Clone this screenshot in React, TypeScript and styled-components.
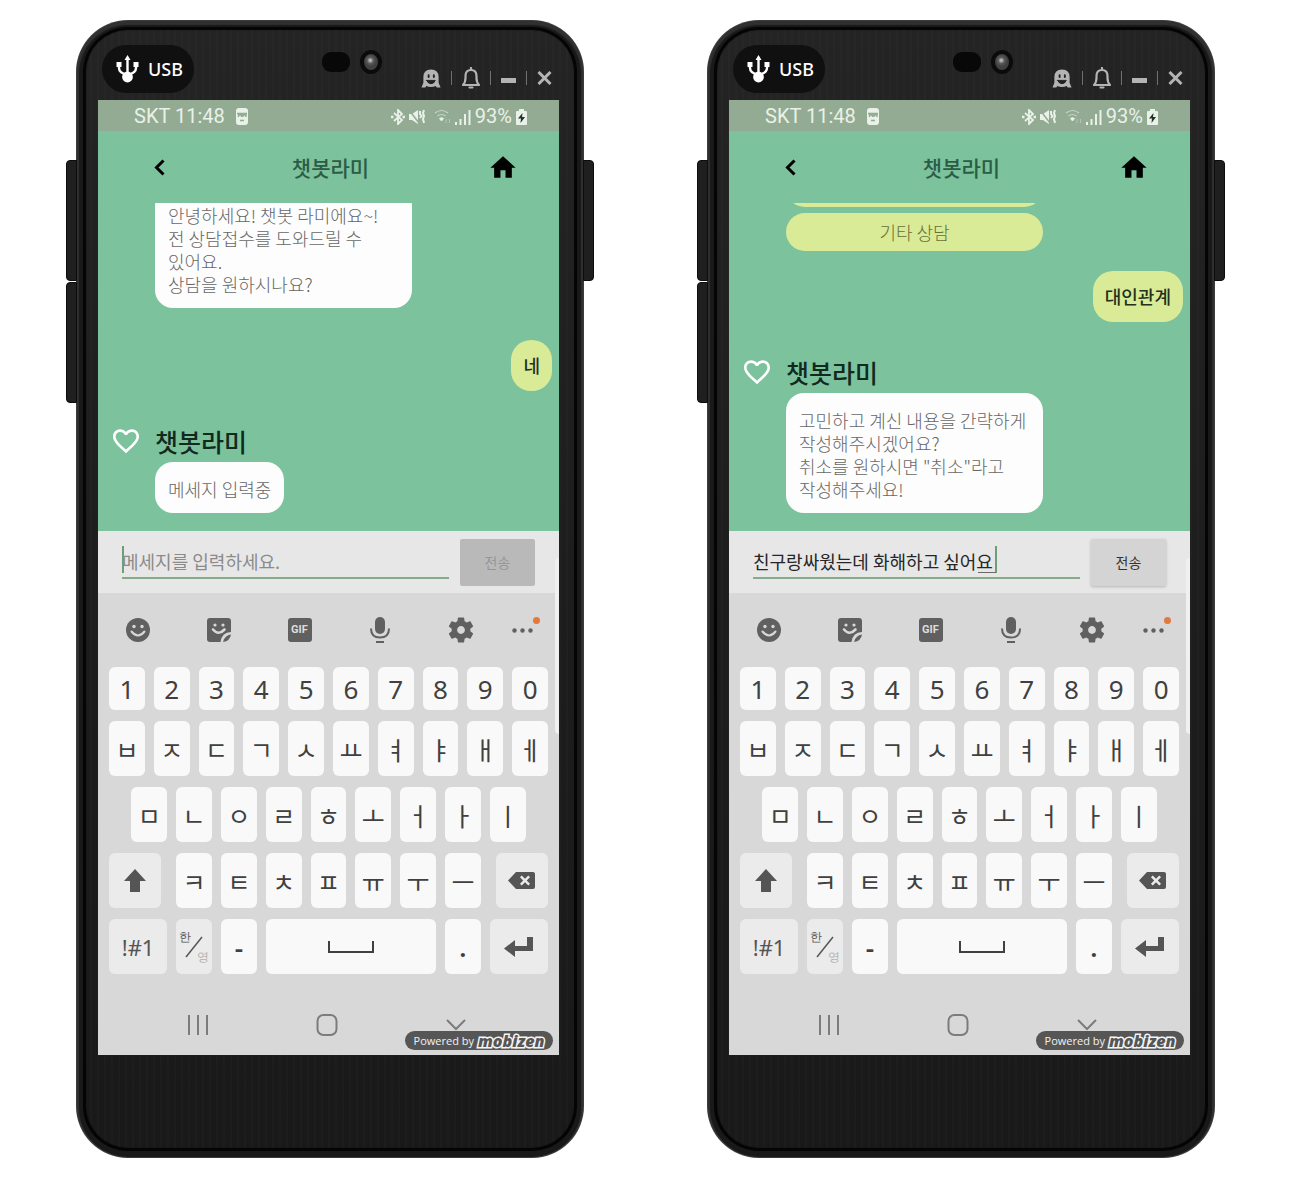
import React from "react";
import styled, { createGlobalStyle, css } from "styled-components";

const GlobalStyle = createGlobalStyle`
  *, *::before, *::after { box-sizing: border-box; }
  body {
    margin: 0;
    background: #ffffff;
    font-family: "Noto Sans CJK KR", "Noto Sans", sans-serif;
  }
  button, input { font: inherit; color: inherit; }
  button { border: 0; padding: 0; background: none; cursor: pointer; }
  svg { display: block; }
`;

const Page = styled.main`
  display: flex;
  align-items: flex-start;
  gap: 123px;
  padding: 20px 75px 20px 76px;
`;

/* ---------- device ---------- */

const Device = styled.section`
  position: relative;
  flex: 1 1 0;
  min-width: 440px;
  padding: 0 25px 103px 22px;
  border-radius: 52px;
  background:
    repeating-linear-gradient(90deg, rgba(255, 255, 255, 0.015) 0 2px, transparent 2px 7px),
    linear-gradient(#242424, #1d1d1d 50%, #191919);
  box-shadow:
    inset 0 0 0 1px #3c3c3c,
    inset 0 2px 1px 3px #303030,
    inset 0 0 0 7px #191919,
    inset 0 0 1px 10px #040404;
`;

const SideKey = styled.span<{ $side: "left" | "right"; $top: number }>`
  position: absolute;
  top: ${(p) => p.$top}px;
  ${(p) => p.$side}: -10px;
  width: 11px;
  height: 121px;
  background: #1f1f1f;
  border: 1px solid #0c0c0c;
  border-radius: ${(p) => (p.$side === "left" ? "4px 0 0 4px" : "0 4px 4px 0")};
`;

const TopBezel = styled.div`
  display: flex;
  align-items: flex-start;
  height: 80px;
  padding: 25px 7px 0 4px;
`;

const UsbBadge = styled.div`
  display: flex;
  align-items: center;
  gap: 9px;
  height: 48px;
  padding: 0 11px 0 14px;
  border-radius: 24px;
  background: #101010;
  color: #ffffff;
  font: 500 18px/24px "Noto Sans", sans-serif;
`;

const Sensors = styled.div`
  display: flex;
  align-items: center;
  gap: 10px;
  margin: 5px 39px 0 auto;
`;

const Speaker = styled.span`
  width: 28px;
  height: 20px;
  border-radius: 9px;
  background: #080808;
`;

const Lens = styled.span`
  width: 22px;
  height: 24px;
  border: 4px solid #0b0b0b;
  border-radius: 50%;
  background: radial-gradient(circle at 45% 40%, #b5b5b5 0 1px, #5c5c5c 3px, #404040 6px);
`;

const WindowBar = styled.div`
  display: flex;
  align-items: center;
  gap: 10px;
  height: 24px;
  margin-top: 21px;
  color: #b4b4b4;
`;

const WindowButton = styled.button`
  display: grid;
  place-items: center;
  height: 24px;
`;

const Divider = styled.span`
  width: 1px;
  height: 14px;
  background: #707070;
`;

const Screen = styled.div`
  position: relative;
  overflow: hidden;
  background: #7bc29d;
`;

/* ---------- app bars ---------- */

const StatusBar = styled.div`
  display: flex;
  align-items: center;
  justify-content: space-between;
  height: 31px;
  padding: 2px 32px 0 36px;
  background: #93ab92;
  color: #e9f1e9;
  font: 400 20px/29px Roboto, sans-serif;
`;

const StatusGroup = styled.div<{ $gap: number }>`
  display: flex;
  align-items: center;
  gap: ${(p) => p.$gap}px;
`;

const AppBar = styled.header`
  display: flex;
  align-items: center;
  justify-content: space-between;
  height: 72px;
  padding: 0 43px 0 49px;
  color: #000000;
`;

const AppTitle = styled.h1`
  margin: 0;
  font-size: 21px;
  font-weight: 500;
  line-height: 32px;
  color: #2b5c45;
`;

/* ---------- conversation ---------- */

const Chat = styled.div`
  display: flex;
  flex-direction: column;
  justify-content: flex-end;
  height: 328px;
  padding: 0 7px 18px 15px;
  overflow: hidden;
`;

const Indent = styled.div`
  display: flex;
  flex-direction: column;
  align-items: flex-start;
  flex-shrink: 0;
  gap: 6px;
  padding-left: 42px;
`;

const BotBubble = styled.p<{ $wide?: boolean }>`
  margin: 0;
  ${(p) => p.$wide && css`width: 257px;`}
  padding: 16px 13px 12px;
  border-radius: 18px;
  background: #fdfdfd;
  color: #676767;
  font-size: 18px;
  font-weight: 300;
  line-height: 23px;
  white-space: pre-line;
`;

const UserBubble = styled.p<{ $space: number }>`
  flex-shrink: 0;
  align-self: flex-end;
  margin: ${(p) => p.$space}px 0 29px;
  padding: 14px 12px;
  border-radius: 20px;
  background: #daeb98;
  color: #22301c;
  font-size: 18px;
  font-weight: 500;
  line-height: 23px;
`;

const Sender = styled.div`
  display: flex;
  flex-shrink: 0;
  align-items: center;
  gap: 16px;
  height: 42px;
  color: #ffffff;
`;

const SenderName = styled.h2`
  margin: 0;
  color: #12291d;
  font-size: 25px;
  font-weight: 500;
  line-height: 42px;
`;

const Choice = styled.button`
  width: 257px;
  height: 38px;
  border-radius: 19px;
  background: #daeb98;
  color: #666f36;
  font-size: 18px;
  font-weight: 300;
  line-height: 38px;
`;

/* ---------- composer ---------- */

const Composer = styled.form`
  display: flex;
  align-items: center;
  gap: 11px;
  height: 62px;
  padding: 0 24px;
  background: #e7e7e7;
`;

const Field = styled.div`
  position: relative;
  flex: 1;
  min-width: 0;
`;

const MessageInput = styled.input`
  display: block;
  width: 100%;
  height: 34px;
  padding: 0;
  border: 0;
  border-bottom: 2px solid #83ab8c;
  border-radius: 0;
  outline: 0;
  background: transparent;
  color: #262626;
  font-size: 18px;
  line-height: 28px;
  &::placeholder { color: #8b8b8b; opacity: 1; }
`;

const Caret = styled.span`
  position: absolute;
  top: 1px;
  left: 0;
  width: 2px;
  height: 27px;
  background: #6f9c7b;
`;

const Composing = styled.span`
  position: absolute;
  top: 1px;
  left: 225px;
  width: 19px;
  height: 27px;
  border-right: 2px solid #6f9c7b;
  border-bottom: 1px solid #6a6a6a;
`;

const SendButton = styled.button`
  width: 75px;
  height: 47px;
  border-radius: 2px;
  background: #d4d4d4;
  box-shadow: 0 1px 3px rgba(0, 0, 0, 0.22);
  color: #333333;
  font-size: 14px;
  line-height: 20px;
  &:disabled {
    background: #b9b9b9;
    box-shadow: none;
    color: #969696;
  }
`;

const EdgeHandle = styled.span`
  position: absolute;
  top: 458px;
  right: 0;
  width: 4px;
  height: 176px;
  border-radius: 4px 0 0 4px;
  background: #f0f0f0;
`;

/* ---------- keyboard ---------- */

const Keyboard = styled.div`
  background: #d8d8d8;
  color: #404040;
`;

const Tools = styled.div`
  display: grid;
  grid-template-columns: repeat(5, 15fr) 8fr;
  align-items: center;
  height: 74px;
  padding-right: 15px;
  color: #606060;
`;

const ToolButton = styled.button`
  position: relative;
  justify-self: center;
  display: grid;
  place-items: center;
  width: 26px;
  height: 26px;
`;

const NewDot = styled.span`
  position: absolute;
  top: 0;
  right: -4px;
  width: 7px;
  height: 7px;
  border-radius: 50%;
  background: #e2793f;
`;

const Keys = styled.div`
  display: grid;
  grid-template-columns: repeat(20, 1fr);
  grid-template-rows: 43px repeat(4, 55px);
  gap: 11px 9px;
  padding: 0 11px;
`;

type KeyKind = "digit" | "jamo" | "action";

const Key = styled.button<{ $kind: KeyKind; $span: number; $start?: number; $trim?: "left" | "right" }>`
  display: grid;
  place-items: center;
  grid-column: ${(p) => p.$start ?? "auto"} / span ${(p) => p.$span};
  ${(p) => p.$trim && `margin-${p.$trim}: 6px;`}
  border-radius: 6px;
  background: ${(p) => (p.$kind === "action" ? "#ebebeb" : "#f9f9f9")};
  ${(p) => p.$kind === "action" && css`color: #555555;`}
  font-size: ${(p) => (p.$kind === "jamo" ? 25 : p.$kind === "digit" ? 26 : 22)}px;
  line-height: 32px;
  ${(p) => p.$kind !== "jamo" && css`font-family: "Noto Sans", sans-serif;`}
`;

const Punctuation = styled(Key)`
  font-weight: 600;
`;

const Language = styled.span`
  display: grid;
  grid-template-columns: 12px 6px 12px;
  grid-template-rows: 16px 18px;
  justify-content: center;
  font-size: 12px;
  line-height: 14px;
`;

const Alternate = styled.span`
  grid-area: 2 / 3;
  align-self: end;
  color: #b2b2b2;
`;

const Slash = styled.svg`
  grid-area: 1 / 1 / 3 / 4;
  place-self: center;
`;

const Primary = styled.span`
  grid-area: 1 / 1;
`;

const NavBar = styled.nav`
  display: grid;
  grid-template-columns: repeat(3, 1fr);
  place-items: center;
  height: 81px;
  padding: 20px 39px 0 35px;
  color: #7c7c7c;
`;

const NavButton = styled.button`
  display: grid;
  place-items: center;
`;

const Powered = styled.div`
  position: absolute;
  right: 6px;
  bottom: 5px;
  display: flex;
  align-items: center;
  justify-content: center;
  gap: 4px;
  width: 148px;
  height: 19px;
  border-radius: 10px;
  background: #565656;
  color: #f2f2f2;
  font: 400 11px/19px "Open Sans", sans-serif;
`;

const Brand = styled.span`
  color: #565656;
  font: italic 800 16px/16px "Open Sans", sans-serif;
  -webkit-text-stroke: 3px #f4f4f4;
  paint-order: stroke fill;
`;

/* ---------- drawings ---------- */

const Glyph = ({ d, size = 24, box = "0 0 24 24", width }: { d: string; size?: number; box?: string; width?: number }) => (
  <svg width={width ?? size} height={size} viewBox={box} fill="currentColor" fillRule="evenodd" aria-hidden="true">
    <path d={d} />
  </svg>
);

const UsbIcon = () => (
  <svg width="23" height="28" viewBox="0 0 23 28" fill="none" stroke="#fff" strokeWidth="2.4" aria-hidden="true">
    <path d="M11.500 4v18M3 10v3q0 5 8.500 7Q20 18 20 13v-3" />
    <circle cx="11.500" cy="22" r="5.400" fill="#fff" stroke="none" />
    <path d="M11.500 0l3 5h-6zM.5 7h5v5h-5zM17.500 7h5v5h-5z" fill="#fff" stroke="none" />
  </svg>
);

const GhostIcon = () => (
  <svg width="20" height="19" viewBox="0 0 21 19" aria-hidden="true">
    <path fill="currentColor" d="M10.500 0q8 0 8 8v6l2 5h-4l-1-1.500q-5 2-10 0L4.500 19h-4l2-5V8q0-8 8-8z" />
    <g fill="none" stroke="#222" strokeWidth="2" strokeLinecap="round">
      <path d="M8 6v2M13.500 6v2" />
      <path d="M6 11.500h9q-1.500 3.500-4.500 3.500T6 11.500z" fill="#222" strokeWidth="1" />
    </g>
  </svg>
);

const BellIcon = () => (
  <svg width="18" height="22" viewBox="1 0 18 22" fill="none" stroke="currentColor" strokeWidth="2.2" aria-hidden="true">
    <path d="M10 1v2M2 18q2.500-2.500 2.500-7V9q0-6 5.500-6t5.500 6v2q0 4.500 2.500 7zM8.500 20.500h3" strokeLinejoin="round" strokeLinecap="round" />
  </svg>
);

const SamsungMark = () => (
  <svg width="12" height="17" viewBox="0 0 12 17" aria-hidden="true">
    <rect width="12" height="17" rx="3" fill="currentColor" />
    <path d="M1 5.500h10M2.500 9V7h3v2M7 9V7h3v2M4 12.500h4" stroke="#93ab92" strokeWidth="1.400" fill="none" />
  </svg>
);

const BluetoothIcon = () => (
  <svg width="14" height="16" viewBox="0 0 14 16" fill="none" stroke="currentColor" strokeWidth="1.800" aria-hidden="true">
    <path d="M3 4l8 7-4 4V1l4 4-8 7" />
    <path d="M0 8h2.500M11.500 8H14" strokeWidth="2.400" />
  </svg>
);

const MuteIcon = () => (
  <svg width="17" height="16" viewBox="0 0 17 16" aria-hidden="true">
    <path d="M0 5h3l6-4v14l-6-4H0z" fill="currentColor" />
    <path d="M0 1l10 13" stroke="#93ab92" strokeWidth="1.500" />
    <path d="M11 2v3l1.500 2-1.500 2M15 1l-1 3 1 3-1 3 1 4" fill="none" stroke="currentColor" strokeWidth="2" />
  </svg>
);

const WifiIcon = () => (
  <svg width="17" height="15" viewBox="0 0 17 15" fill="none" stroke="currentColor" aria-hidden="true">
    <path d="M1 4q6.500-5 13 0M3.500 7q4-3 8 0" strokeWidth="1.200" opacity=".6" />
    <path d="M5.500 9.500q2-1.500 4 0l-2 2.500z" fill="currentColor" />
    <path d="M12 10v4M15.500 10v4" strokeWidth="1" opacity=".4" />
  </svg>
);

const SignalIcon = () => (
  <svg width="16" height="16" viewBox="0 0 16 16" stroke="currentColor" strokeWidth="2" aria-hidden="true">
    <path d="M1 16v-3M5.500 16v-6M10 16V5M14.500 16V1" />
  </svg>
);

const BatteryIcon = () => (
  <svg width="11" height="16" viewBox="0 0 11 16" aria-hidden="true">
    <path fill="currentColor" d="M3 0h5v2h2q1 0 1 1v12q0 1-1 1H1q-1 0-1-1V3q0-1 1-1h2z" />
    <path fill="#1f3327" d="M6.500 4L2 9.500h3L4.500 14 9 8H6z" />
  </svg>
);

const HOME = "M10 20v-6h4v6h5v-8h3L12 3 2 12h3v8z";
const HEART = "M16.500 3c-1.740 0-3.410.81-4.500 2.090C10.910 3.810 9.240 3 7.500 3 4.420 3 2 5.420 2 8.500c0 3.780 3.400 6.860 8.550 11.540L12 21.350l1.450-1.320C18.600 15.360 22 12.280 22 8.500 22 5.420 19.580 3 16.500 3zm-4.400 15.550l-.1.1-.1-.1C7.140 14.240 4 11.390 4 8.500 4 6.500 5.500 5 7.500 5c1.540 0 3.040.99 3.570 2.360h1.870C13.460 5.990 14.960 5 16.500 5c2 0 3.500 1.500 3.500 3.500 0 2.890-3.140 5.740-7.900 10.050z";
const GEAR = "M19.140 12.940c.04-.3.060-.61.060-.94 0-.32-.02-.64-.07-.94l2.030-1.580c.18-.14.230-.41.120-.61l-1.920-3.320c-.12-.22-.37-.29-.59-.22l-2.390.96c-.5-.38-1.030-.7-1.620-.94l-.36-2.540c-.04-.24-.24-.41-.48-.41h-3.840c-.24 0-.43.17-.47.41l-.36 2.540c-.59.24-1.130.57-1.620.94l-2.390-.96c-.22-.08-.47 0-.59.22L2.740 8.870c-.12.21-.08.47.12.61l2.030 1.580c-.05.3-.09.63-.09.94s.02.64.07.94l-2.030 1.580c-.18.14-.23.41-.12.61l1.920 3.320c.12.22.37.29.59.22l2.390-.96c.5.38 1.030.7 1.620.94l.36 2.540c.05.24.24.41.48.41h3.840c.24 0 .44-.17.470-.41l.36-2.540c.59-.24 1.130-.56 1.620-.94l2.390.96c.22.08.47 0 .59-.22l1.920-3.320c.12-.22.070-.47-.12-.61l-2.010-1.580zM12 15c-1.660 0-3-1.340-3-3s1.340-3 3-3 3 1.340 3 3-1.340 3-3 3z";

const SmileIcon = () => (
  <svg width="24" height="24" viewBox="0 0 24 24" aria-hidden="true">
    <circle cx="12" cy="12" r="12" fill="currentColor" />
    <g fill="#d8d8d8">
      <circle cx="8" cy="8.500" r="1.700" />
      <circle cx="16" cy="8.500" r="1.700" />
    </g>
    <path d="M5.500 13.500q6.500 8 13 0" fill="none" stroke="#d8d8d8" strokeWidth="2" strokeLinecap="round" />
  </svg>
);

const StickerIcon = () => (
  <svg width="24" height="24" viewBox="0 0 24 24" aria-hidden="true">
    <path fill="currentColor" d="M3 0h18q3 0 3 3v11q-9 0-10.500 10H3q-3 0-3-3V3q0-3 3-3z" />
    <path fill="currentColor" d="M24 16.500q-1 6.500-8 7.500 1.500-6.500 8-7.500z" />
    <g fill="#d8d8d8">
      <circle cx="8" cy="7" r="1.600" />
      <circle cx="16" cy="7" r="1.600" />
    </g>
    <path d="M6 11.500q5.500 6.500 11.500 0" fill="none" stroke="#d8d8d8" strokeWidth="2.600" strokeLinecap="round" />
  </svg>
);

const GifIcon = styled.span`
  display: grid;
  place-items: center;
  width: 24px;
  height: 24px;
  border-radius: 3px;
  background: #606060;
  color: #dedede;
  font: 700 11px/24px Roboto, sans-serif;
`;

const MicIcon = () => (
  <svg width="22" height="26" viewBox="0 0 22 26" aria-hidden="true">
    <rect x="6" width="10" height="17" rx="5" fill="currentColor" />
    <path d="M2 11.500q0 9 9 9t9-9M7 25h8" fill="none" stroke="currentColor" strokeWidth="2" />
  </svg>
);

const MoreIcon = () => (
  <svg width="21" height="5" viewBox="0 0 21 5" fill="currentColor" aria-hidden="true">
    <circle cx="2.500" cy="2.500" r="2.200" />
    <circle cx="10.500" cy="2.500" r="2.200" />
    <circle cx="18.500" cy="2.500" r="2.200" />
  </svg>
);

/* ---------- composition ---------- */

const digits = "1234567890".split("");
const rowOne = "ㅂㅈㄷㄱㅅㅛㅕㅑㅐㅔ".split("");
const rowTwo = "ㅁㄴㅇㄹㅎㅗㅓㅏㅣ".split("");
const rowThree = "ㅋㅌㅊㅍㅠㅜㅡ".split("");

function SoftKeyboard() {
  return (
    <Keyboard>
      <Tools>
        <ToolButton type="button" aria-label="이모티콘"><SmileIcon /></ToolButton>
        <ToolButton type="button" aria-label="스티커"><StickerIcon /></ToolButton>
        <ToolButton type="button"><GifIcon>GIF</GifIcon></ToolButton>
        <ToolButton type="button" aria-label="음성 입력"><MicIcon /></ToolButton>
        <ToolButton type="button" aria-label="설정"><Glyph d={GEAR} size={26} box="2 2 20 20" /></ToolButton>
        <ToolButton type="button" aria-label="더보기"><MoreIcon /><NewDot /></ToolButton>
      </Tools>
      <Keys>
        {digits.map((k) => <Key key={k} type="button" $kind="digit" $span={2}>{k}</Key>)}
        {rowOne.map((k) => <Key key={k} type="button" $kind="jamo" $span={2}>{k}</Key>)}
        {rowTwo.map((k, i) => (
          <Key key={k} type="button" $kind="jamo" $span={2} $start={i === 0 ? 2 : undefined}>{k}</Key>
        ))}
        <Key type="button" aria-label="Shift" $kind="action" $span={3} $start={1} $trim="right">
          <Glyph d="M11 0l11 12h-6v11H6V12H0z" box="0 0 22 23" width={22} size={23} />
        </Key>
        {rowThree.map((k) => <Key key={k} type="button" $kind="jamo" $span={2}>{k}</Key>)}
        <Key type="button" aria-label="지우기" $kind="action" $span={3} $trim="left">
          <Glyph d="M8 0h17q2 0 2 2v13q0 2-2 2H8L0 8.500zM12 5.200L15.200 8.500 12 11.800 13.700 13.500 17 10.200 20.300 13.500 22 11.800 18.700 8.500 22 5.200 20.300 3.500 17 6.800 13.700 3.500z" box="0 0 27 17" width={27} size={17} />
        </Key>
        <Key type="button" $kind="action" $span={3}>!#1</Key>
        <Key type="button" $kind="action" $span={2}>
          <Language>
            <Primary>한</Primary>
            <Slash width="20" height="22" viewBox="0 0 20 22" stroke="currentColor" strokeWidth="1.5" aria-hidden="true">
              <path d="M18 1L2 21" />
            </Slash>
            <Alternate>영</Alternate>
          </Language>
        </Key>
        <Punctuation type="button" $kind="digit" $span={2}>-</Punctuation>
        <Key type="button" aria-label="스페이스" $kind="digit" $span={8}>
          <svg width="46" height="12" viewBox="0 0 46 12" fill="none" stroke="currentColor" strokeWidth="2" aria-hidden="true">
            <path d="M1 0v11h44V0" />
          </svg>
        </Key>
        <Punctuation type="button" $kind="digit" $span={2}>.</Punctuation>
        <Key type="button" aria-label="Enter" $kind="action" $span={3}>
          <Glyph d="M23 0h6v14H11v6L0 11.500 11 3v6h12z" box="0 0 29 20" width={29} size={20} />
        </Key>
      </Keys>
      <NavBar>
        <NavButton type="button" aria-label="최근 앱">
          <svg width="20" height="20" viewBox="0 0 20 20" stroke="currentColor" strokeWidth="2" aria-hidden="true">
            <path d="M1 0v20M10 0v20M19 0v20" />
          </svg>
        </NavButton>
        <NavButton type="button" aria-label="홈">
          <svg width="22" height="22" viewBox="0 0 22 22" fill="none" stroke="currentColor" strokeWidth="2" aria-hidden="true">
            <rect x="1.500" y="1" width="19" height="20" rx="6" />
          </svg>
        </NavButton>
        <NavButton type="button" aria-label="닫기">
          <svg width="20" height="12" viewBox="0 0 20 12" fill="none" stroke="currentColor" strokeWidth="2" aria-hidden="true">
            <path d="M1 1l9 9 9-9" />
          </svg>
        </NavButton>
      </NavBar>
    </Keyboard>
  );
}

function Phone({ draft, children }: { draft?: string; children: React.ReactNode }) {
  return (
    <Device>
      <SideKey $side="left" $top={140} />
      <SideKey $side="left" $top={262} />
      <SideKey $side="right" $top={140} />
      <TopBezel>
        <UsbBadge><UsbIcon />USB</UsbBadge>
        <Sensors><Speaker /><Lens /></Sensors>
        <WindowBar>
          <WindowButton type="button" aria-label="프로필"><GhostIcon /></WindowButton>
          <Divider />
          <WindowButton type="button" aria-label="알림"><BellIcon /></WindowButton>
          <Divider />
          <WindowButton type="button" aria-label="최소화">
            <Glyph d="M0 8h15v5H0z" box="0 0 15 17" width={15} size={17} />
          </WindowButton>
          <Divider />
          <WindowButton type="button" aria-label="창 닫기">
            <svg width="15" height="14" viewBox="0 0 15 14" stroke="currentColor" strokeWidth="3" aria-hidden="true">
              <path d="M1.500 1l12 12M13.500 1l-12 12" />
            </svg>
          </WindowButton>
        </WindowBar>
      </TopBezel>
      <Screen>
        <StatusBar>
          <StatusGroup $gap={11}><span>SKT 11:48</span><SamsungMark /></StatusGroup>
          <StatusGroup $gap={4}>
            <BluetoothIcon />
            <MuteIcon />
            <span />
            <WifiIcon />
            <SignalIcon />
            <span>93%</span>
            <BatteryIcon />
          </StatusGroup>
        </StatusBar>
        <AppBar>
          <WindowButton type="button" aria-label="뒤로">
            <svg width="24" height="24" viewBox="0 0 24 24" fill="none" stroke="currentColor" strokeWidth="3" aria-hidden="true">
              <path d="M16.500 5.500l-7 7 7 7" />
            </svg>
          </WindowButton>
          <AppTitle>챗봇라미</AppTitle>
          <WindowButton type="button" aria-label="홈으로">
            <Glyph d={HOME} box="2 2 20 19" width={26} size={24} />
          </WindowButton>
        </AppBar>
        <Chat>{children}</Chat>
        <Composer onSubmit={(e) => e.preventDefault()}>
          <Field>
            <MessageInput aria-label="메세지" placeholder="메세지를 입력하세요." defaultValue={draft} />
            {draft ? <Composing /> : <Caret />}
          </Field>
          <SendButton type="submit" disabled={!draft}>전송</SendButton>
        </Composer>
        <SoftKeyboard />
        <EdgeHandle />
        <Powered>Powered by <Brand>mobizen</Brand></Powered>
      </Screen>
    </Device>
  );
}

const BotSender = () => (
  <Sender>
    <Glyph d={HEART} box="2 2 20 20" size={26} />
    <SenderName>챗봇라미</SenderName>
  </Sender>
);

export default function App() {
  return (
    <>
      <GlobalStyle />
      <Page>
        <Phone>
          <Indent>
            <BotBubble $wide>{"안녕하세요! 챗봇 라미에요~!\n전 상담접수를 도와드릴 수\n있어요.\n상담을 원하시나요?"}</BotBubble>
          </Indent>
          <UserBubble $space={32}>네</UserBubble>
          <BotSender />
          <Indent>
            <BotBubble>메세지 입력중</BotBubble>
          </Indent>
        </Phone>
        <Phone draft="친구랑싸웠는데 화해하고 싶어요">
          <Indent>
            <Choice as="span" aria-hidden="true" />
            <Choice type="button">기타 상담</Choice>
          </Indent>
          <UserBubble $space={20}>대인관계</UserBubble>
          <BotSender />
          <Indent>
            <BotBubble $wide>{"고민하고 계신 내용을 간략하게\n작성해주시겠어요?\n취소를 원하시면 \"취소\"라고\n작성해주세요!"}</BotBubble>
          </Indent>
        </Phone>
      </Page>
    </>
  );
}
